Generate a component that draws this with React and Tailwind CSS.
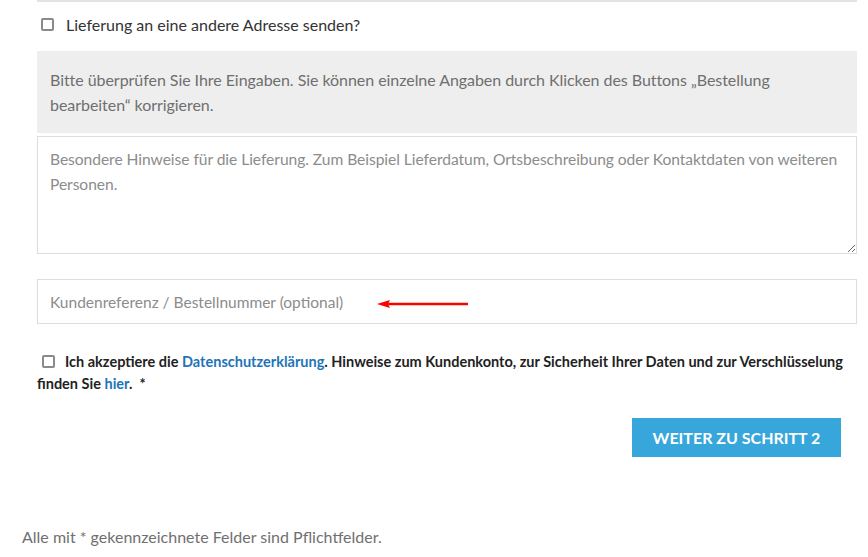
import { useState } from "react";

function Box({ checked, onChange, className = "" }) {
  return (
    <input
      type="checkbox"
      checked={checked}
      onChange={(e) => onChange(e.target.checked)}
      className={`h-[13px] w-[13px] shrink-0 appearance-none rounded-[2px] border-2 border-[#8a8a8a] bg-white ${className}`}
    />
  );
}

export default function App() {
  const [otherAddress, setOtherAddress] = useState(false);
  const [accepted, setAccepted] = useState(false);

  return (
    <div className="min-h-[557px] bg-white font-['Lato',sans-serif] text-[#333]">
      <div className="ml-[37px] w-[820px]">
        <div className="h-[2px] bg-[#e3e3e3]" />

        <label className="flex h-[49px] items-start gap-[12px] pl-[4px] pt-[13px] text-[16px] leading-[20px]">
          <Box checked={otherAddress} onChange={setOtherAddress} className="mt-[3px]" />
          Lieferung an eine andere Adresse senden?
        </label>

        <div className="bg-[#eeeeee] px-[13px] pb-[16px] pt-[16px] text-[16px] leading-[25px] tracking-[-0.05px] text-[#6f6f6f]">
          Bitte überprüfen Sie Ihre Eingaben. Sie können einzelne Angaben durch Klicken des Buttons „Bestellung bearbeiten“ korrigieren.
        </div>

        <textarea
          className="mt-[3px] block h-[118px] w-full border border-[#dddddd] px-[12px] py-[10px] text-[15.6px] leading-[25px] tracking-[-0.05px] text-[#555] outline-none placeholder:text-[#8c8c8c]"
          placeholder="Besondere Hinweise für die Lieferung. Zum Beispiel Lieferdatum, Ortsbeschreibung oder Kontaktdaten von weiteren Personen."
        />

        <div className="relative mt-[25px]">
          <input
            type="text"
            className="block h-[45px] w-full border border-[#dddddd] px-[12px] text-[15.5px] text-[#555] outline-none placeholder:text-[#8c8c8c]"
            placeholder="Kundenreferenz / Bestellnummer (optional)"
          />
          <svg
            className="pointer-events-none absolute left-[338px] top-[20px]"
            width="94"
            height="10"
            viewBox="0 0 94 10"
          >
            <line x1="10" y1="5" x2="93" y2="5" stroke="#ff0000" strokeWidth="2.4" />
            <path d="M2 5 L15 1 L13 5 L15 9 Z" fill="#ff0000" />
          </svg>
        </div>

        <div className="mt-[27px] text-[14.5px] font-bold leading-[22px] text-[#222]">
          <Box checked={accepted} onChange={setAccepted} className="mx-[5px] inline-block align-[-1px]" />
          <span className="ml-[5px]">Ich akzeptiere die </span>
          <a href="#" className="text-[#1d74b8]">Datenschutzerklärung</a>. Hinweise zum Kundenkonto, zur Sicherheit Ihrer Daten und zur Verschlüsselung finden Sie{" "}
          <a href="#" className="text-[#1d74b8]">hier</a>.&nbsp; *
        </div>

        <div className="mt-[23px] flex justify-end pr-[16px]">
          <button
            type="button"
            className="h-[39px] w-[209px] bg-[#37a6db] text-[16px] font-bold uppercase text-white"
          >
            Weiter zu Schritt 2
          </button>
        </div>
      </div>

      <p className="ml-[22px] mt-[68px] text-[16px] text-[#707070]">
        Alle mit * gekennzeichnete Felder sind Pflichtfelder.
      </p>
    </div>
  );
}
